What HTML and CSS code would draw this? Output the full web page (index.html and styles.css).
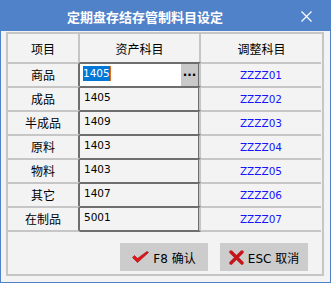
FILE: index.html
```html
<!DOCTYPE html>
<html lang="zh-CN">
<head>
    <meta charset="UTF-8">
    <title>定期盘存结存管制料目设定</title>
    <link rel="stylesheet" href="styles.css">
</head>
<body>
    <div class="window">
        <div class="titlebar">
            <span class="title">定期盘存结存管制料目设定</span>
            <svg class="close" width="11" height="11" viewBox="0 0 11 11">
                <path d="M0.5 0.5 L10.5 10.5 M10.5 0.5 L0.5 10.5" stroke="#fff" stroke-width="1.2" fill="none"/>
            </svg>
        </div>
        <div class="body">
            <div class="panel">
                <div class="grid">
                    <div class="hd c1">项目</div>
                    <div class="hd c2">资产科目</div>
                    <div class="hd c3">调整科目</div>

                    <div class="cell c1">商品</div>
                    <div class="cell c2 focus">
                        <div class="tb">
                            <div class="val"><span class="sel">1405</span><span class="caret"></span></div>
                            <div class="more">···</div>
                        </div>
                    </div>
                    <div class="cell c3">ZZZZ01</div>

                    <div class="cell c1">成品</div>
                    <div class="cell c2"><div class="tb">1405</div></div>
                    <div class="cell c3">ZZZZ02</div>

                    <div class="cell c1">半成品</div>
                    <div class="cell c2"><div class="tb">1409</div></div>
                    <div class="cell c3">ZZZZ03</div>

                    <div class="cell c1">原料</div>
                    <div class="cell c2"><div class="tb">1403</div></div>
                    <div class="cell c3">ZZZZ04</div>

                    <div class="cell c1">物料</div>
                    <div class="cell c2"><div class="tb">1403</div></div>
                    <div class="cell c3">ZZZZ05</div>

                    <div class="cell c1">其它</div>
                    <div class="cell c2"><div class="tb">1407</div></div>
                    <div class="cell c3">ZZZZ06</div>

                    <div class="cell c1 last">在制品</div>
                    <div class="cell c2 last"><div class="tb">5001</div></div>
                    <div class="cell c3 last">ZZZZ07</div>
                </div>
                <div class="footer">
                    <button class="btn">
                        <svg width="17" height="12" viewBox="0 0 17 12">
                            <polygon points="0.5,6.5 2.5,4.5 5.5,7.5 15,0.5 16.5,1.5 5.5,11.5" fill="#e8141b" stroke="#8a0a0a" stroke-width="0.6"/>
                        </svg>
                        <span>F8 确认</span>
                    </button>
                    <button class="btn">
                        <svg width="15" height="15" viewBox="0 0 15 15">
                            <path d="M2 2 L13 13 M13 2 L2 13" stroke="#c3151a" stroke-width="3.4" stroke-linecap="round" fill="none"/>
                        </svg>
                        <span>ESC 取消</span>
                    </button>
                </div>
            </div>
        </div>
    </div>
</body>
</html>
```

FILE: styles.css
```css
body {
    margin: 0;
    font-family: "DejaVu Sans", "Noto Sans CJK SC", sans-serif;
    font-size: 12px;
    color: #000;
}

/* Dialog frame */
.window {
    width: 331px;
    height: 283px;
    box-sizing: border-box;
    border: 1px solid #4f82c8;
    border-top: 0;
    background: #f3f3f3;
}

.titlebar {
    height: 31px;
    background: #4f82c8;
    display: flex;
    align-items: center;
}

.title {
    flex: 1;
    text-align: center;
    padding-top: 3px;
    color: #fff;
    font-family: "Noto Sans CJK SC", sans-serif;
    font-weight: bold;
    font-size: 13px;
    line-height: 16px;
}

.close {
    margin: 2px 18px 0 12px;
}

.body {
    padding: 1px 6px 0 5px;
}

.panel {
    border: 2px solid #c6c6c6;
}

/* Table of accounts */
.grid {
    display: grid;
    grid-template-columns: 72px 121px 1fr;
}

.hd {
    height: 28px;
    display: flex;
    align-items: center;
    justify-content: center;
    font-family: "Noto Sans CJK SC", sans-serif;
    font-size: 12px;
    line-height: 14px;
    padding-top: 2px;
    box-sizing: border-box;
}

.hd.c1,
.hd.c2 {
    border-right: 2px solid #c6c6c6;
}

.cell {
    height: 24px;
    box-sizing: border-box;
    border-top: 2px solid #c6c6c6;
}

.cell.last {
    height: 26px;
    border-bottom: 2px solid #c6c6c6;
}

.cell.c1 {
    display: flex;
    align-items: center;
    justify-content: center;
    font-family: "Noto Sans CJK SC", sans-serif;
    line-height: 14px;
    border-right: 2px solid #6e6e6e;
}

.cell.c2 {
    border-top-color: #6e6e6e;
    border-bottom-color: #6e6e6e;
    border-right: 2px solid #c6c6c6;
}

.cell.c3 {
    display: flex;
    align-items: center;
    justify-content: center;
    color: #1414ff;
    font-size: 10.5px;
    margin-right: 1px;
}

.tb {
    height: 100%;
    box-sizing: border-box;
    border-right: 1px solid #6e6e6e;
    padding: 3px 0 0 4px;
    font-size: 10.5px;
    line-height: 13px;
}

.focus .tb {
    display: flex;
    padding: 0;
}

.val {
    flex: 1;
    background: #fff;
    padding: 2px 0 0 3px;
    display: flex;
    align-items: flex-start;
}

.sel {
    background: #0078d7;
    color: #fff;
    padding: 1px 0;
}

.caret {
    width: 1px;
    height: 15px;
    background: #e07020;
}

.more {
    width: 17px;
    background: #c9c9c9;
    font-weight: bold;
    font-size: 12px;
    text-align: center;
    line-height: 22px;
}

/* Bottom buttons */
.footer {
    height: 42px;
    box-sizing: border-box;
    display: flex;
    justify-content: flex-end;
    gap: 12px;
    padding: 11px 14px 0 0;
}

.btn {
    width: 88px;
    height: 28px;
    border: 0;
    background: #cccccc;
    display: flex;
    align-items: center;
    justify-content: center;
    gap: 4px;
    font-family: "DejaVu Sans", "Noto Sans CJK SC", sans-serif;
    font-size: 12px;
    color: #000;
    padding: 0;
}
```
